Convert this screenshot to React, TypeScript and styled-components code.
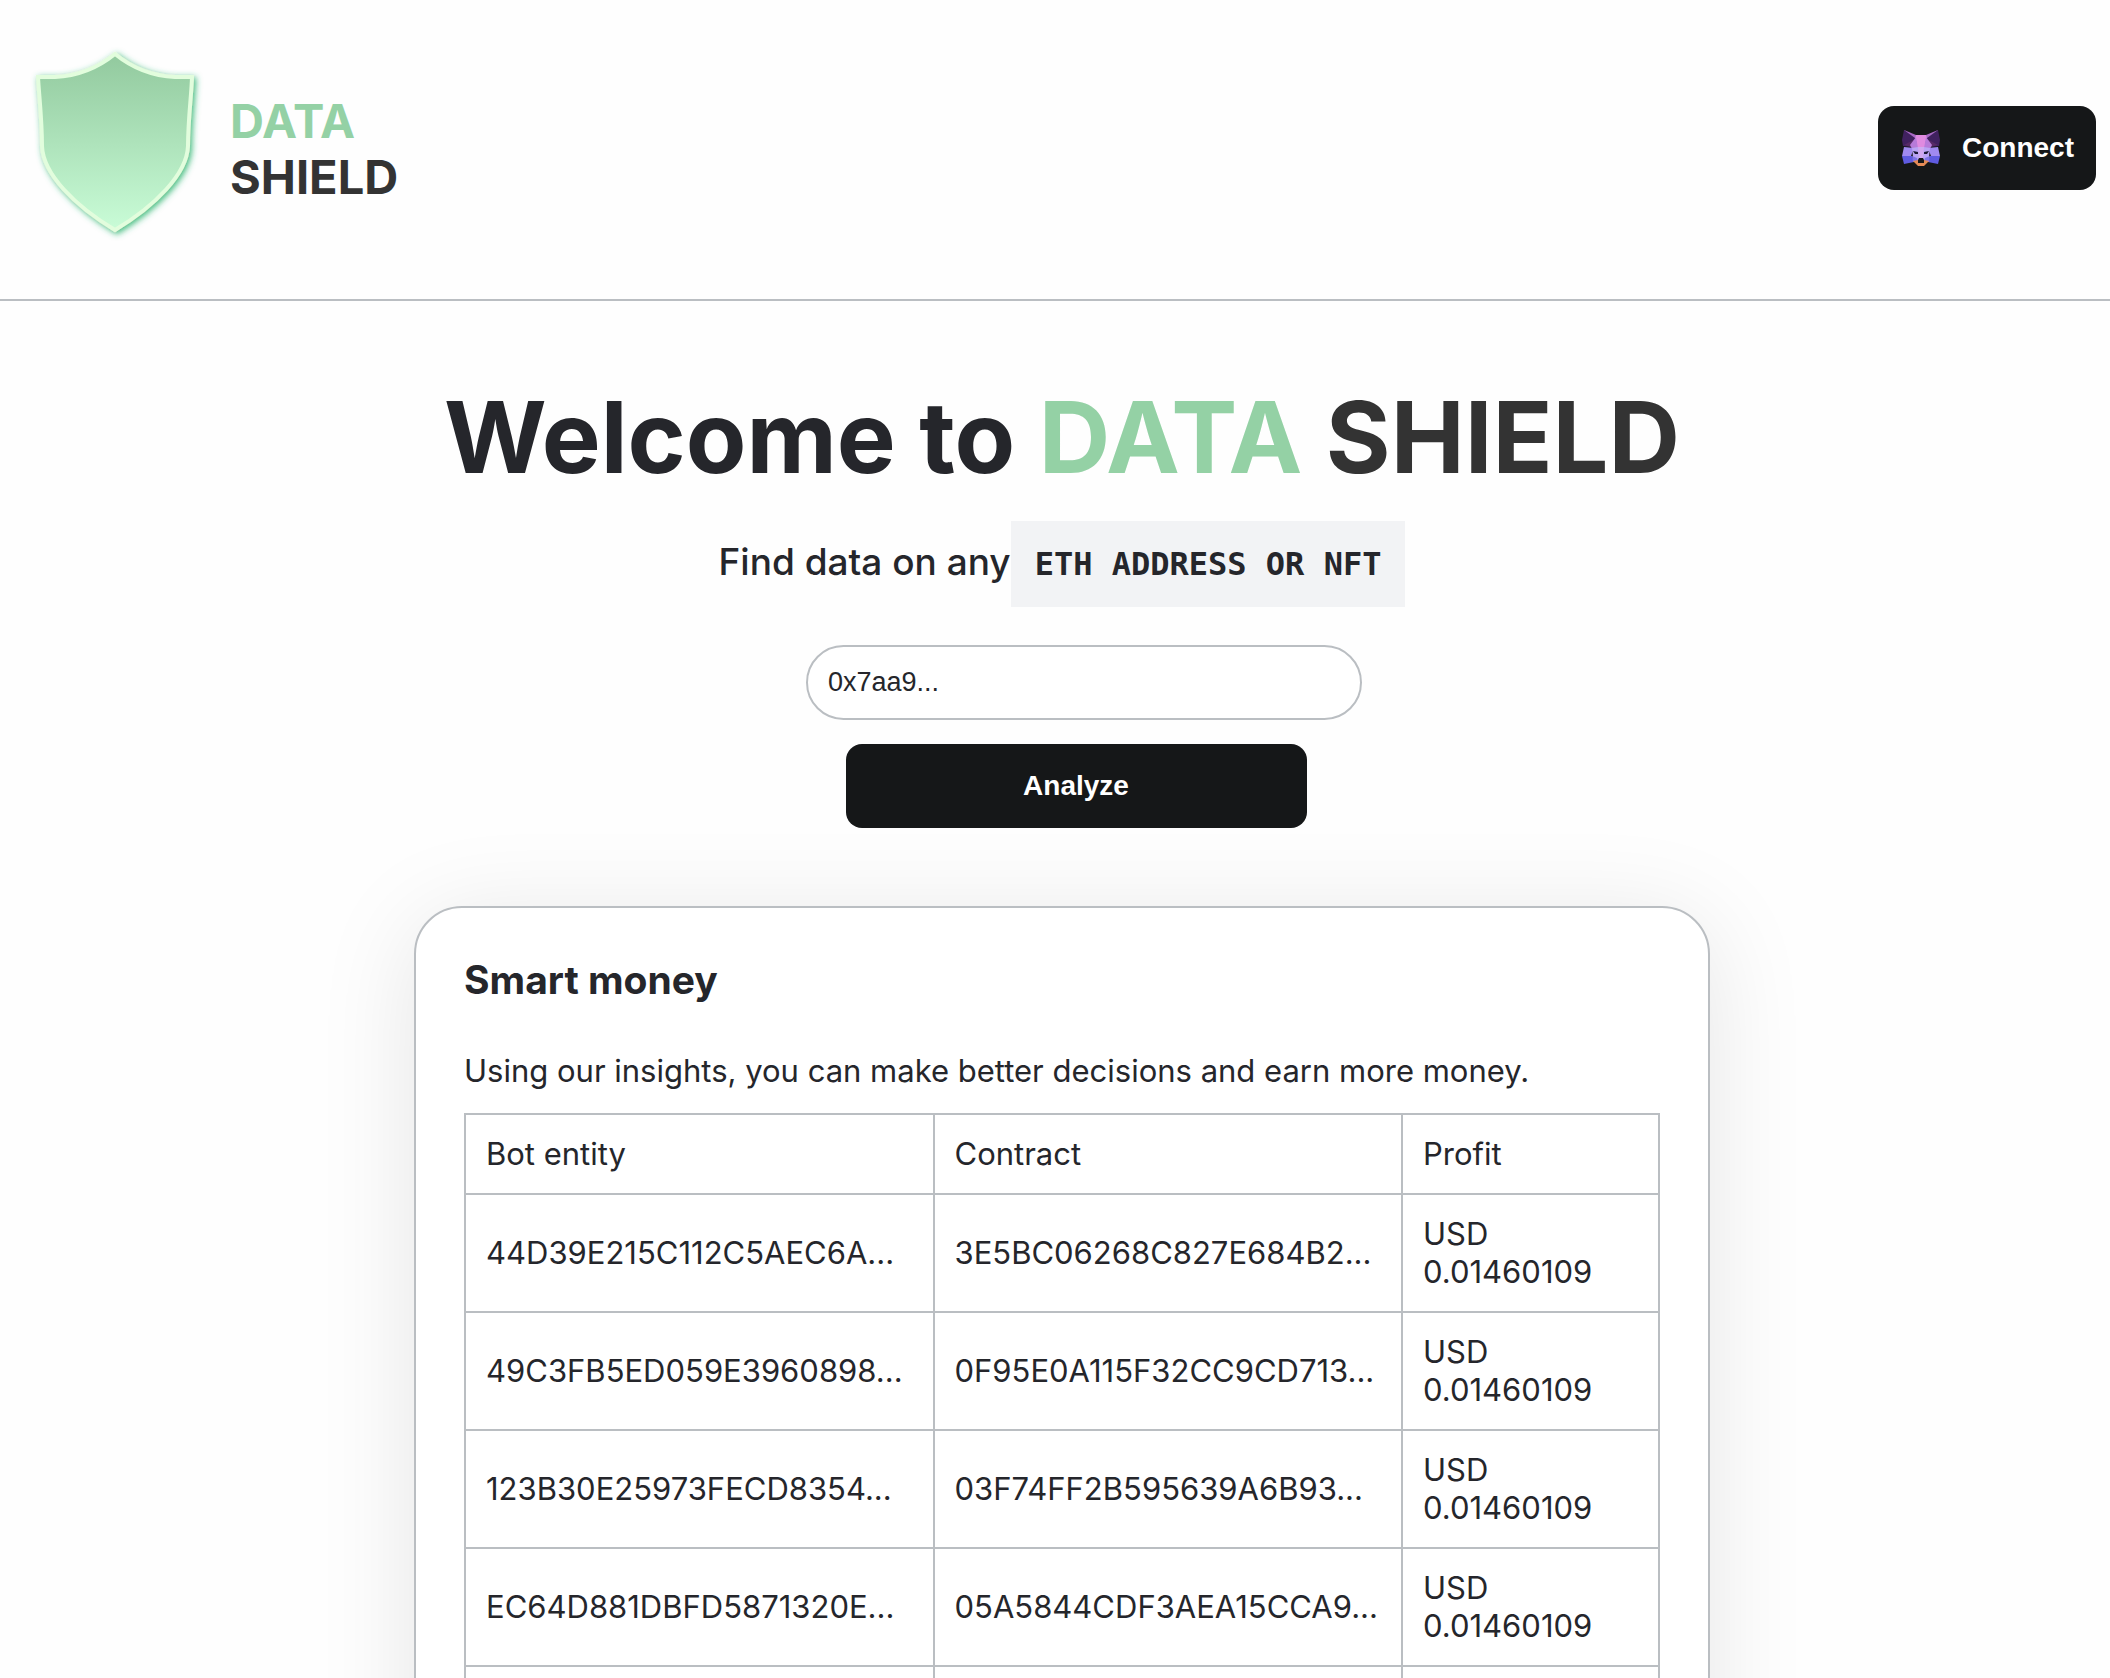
import React, { useState } from "react";
import styled, { createGlobalStyle, css } from "styled-components";

const GlobalStyle = createGlobalStyle`
  *, *::before, *::after { box-sizing: border-box; }
  body {
    margin: 0;
    background: #fefefe;
    color: #25262b;
    font-family: Inter, "Liberation Sans", sans-serif;
    font-size: 31px;
    line-height: 38px;
  }
`;

const Header = styled.header`
  display: flex;
  align-items: center;
  justify-content: space-between;
  padding: 40px 14px 44px 26px;
  border-bottom: 2px solid #babec2;
`;

const Brand = styled.a`
  display: flex;
  align-items: center;
  gap: 23px;
  color: inherit;
  text-decoration: none;
`;

const BrandName = styled.span`
  display: flex;
  flex-direction: column;
  padding-top: 3px;
  font-size: 47px;
  font-weight: 700;
  line-height: 56px;
`;

const Tone = styled.span<{ $accent?: boolean }>`
  color: ${(p) => (p.$accent ? "#94d1a5" : "#333333")};
`;

const Button = styled.button<{ $wide?: boolean }>`
  display: flex;
  align-items: center;
  justify-content: center;
  gap: 20px;
  width: ${(p) => (p.$wide ? "461px" : "auto")};
  height: 84px;
  padding: 0 22px;
  border: 0;
  border-radius: 16px;
  background: #151718;
  color: #ffffff;
  font: 700 28px/32px "Liberation Sans", Arial, sans-serif;
  cursor: pointer;
`;

const Main = styled.main`
  display: flex;
  flex-direction: column;
  align-items: center;
  padding: 68px 0 80px 14px;
`;

const Title = styled.h1`
  margin: 0;
  font-size: 99px;
  font-weight: 700;
  line-height: 136px;
  text-align: center;
`;

const Subtitle = styled.p`
  display: flex;
  align-items: baseline;
  margin: 16px 0 38px;
  font-size: 37px;
  font-weight: 500;
  line-height: 48px;
`;

const Code = styled.code`
  padding: 24px;
  background: #f2f3f5;
  font: 700 32px/38px "DejaVu Sans Mono", monospace;
`;

const Form = styled.form`
  display: flex;
  flex-direction: column;
  align-items: center;
  gap: 24px;
  padding-left: 28px;
`;

const Field = styled.label`
  display: block;
  padding-left: 16px;
`;

const AddressInput = styled.input`
  display: block;
  width: 556px;
  height: 75px;
  padding: 0 20px;
  border: 2px solid #babec2;
  border-radius: 38px;
  background: #ffffff;
  color: #25262b;
  font: 27px/32px "Liberation Sans", Arial, sans-serif;
`;

const Card = styled.section`
  width: 1296px;
  max-width: 100%;
  margin-top: 78px;
  padding: 48px;
  border: 2px solid #babec2;
  border-radius: 48px;
  background: #ffffff;
  box-shadow: 0 14px 100px rgba(0, 0, 0, 0.1);
`;

const CardTitle = styled.h2`
  margin: 0 0 48px;
  font-size: 39px;
  font-weight: 700;
  line-height: 48px;
`;

const Lead = styled.p`
  margin: 0 0 23px;
`;

const Table = styled.table`
  width: 100%;
  table-layout: fixed;
  border-collapse: collapse;
`;

const cell = css`
  padding: 20px;
  border: 2px solid #babec2;
  text-align: left;
  vertical-align: middle;
  font-weight: 400;
`;

const HeadCell = styled.th<{ $narrow?: boolean }>`
  ${cell}
  width: ${(p) => (p.$narrow ? "257px" : "auto")};
`;

const Cell = styled.td`
  ${cell}
  height: 118px;
`;

const rows = [
  ["44D39E215C112C5AEC6A...", "3E5BC06268C827E684B2...", "USD 0.01460109"],
  ["49C3FB5ED059E3960898...", "0F95E0A115F32CC9CD713...", "USD 0.01460109"],
  ["123B30E25973FECD8354...", "03F74FF2B595639A6B93...", "USD 0.01460109"],
  ["EC64D881DBFD5871320E...", "05A5844CDF3AEA15CCA9...", "USD 0.01460109"],
  ["", "", ""],
];

const ShieldLogo = () => (
  <svg width="181" height="215" viewBox="26 40 181 215" aria-hidden="true">
    <defs>
      <linearGradient id="shield" x1="0" y1="0" x2="0" y2="1">
        <stop offset="0" stopColor="#92c99e" />
        <stop offset="1" stopColor="#c9fcd7" />
      </linearGradient>
      <filter id="glow" x="-15%" y="-15%" width="130%" height="130%">
        <feDropShadow dx="2" dy="2" stdDeviation="3" floodColor="#2fb56f" floodOpacity="0.9" />
      </filter>
    </defs>
    <path
      d="M115 54C131 67 152 76 175 77H192C191.500 95 188 120 188 146C187 174 155 206 115 230C75 206 43 174 42 146C42 120 39 95 38 77H55C78 76 99 67 115 54Z"
      fill="url(#shield)"
      stroke="#e2fddd"
      strokeWidth="4"
      filter="url(#glow)"
    />
  </svg>
);

const FoxLogo = () => (
  <svg width="42" height="38" viewBox="0 0 42 38" aria-hidden="true">
    <path d="M15 6H27L30 20H12Z" fill="#e08be0" />
    <path d="M4 1L16 6L14 13H9Z" fill="#a868c4" />
    <path d="M38 1L26 6L28 13H33Z" fill="#a868c4" />
    <path d="M4 1L15 9L17 15L12 18L3 17L2 11Z" fill="#40215f" />
    <path d="M38 1L27 9L25 15L30 18L39 17L40 11Z" fill="#40215f" />
    <path d="M4 16L15 10L12 18Z" fill="#572a66" />
    <path d="M38 16L27 10L30 18Z" fill="#572a66" />
    <path d="M16 8L18 19L12 20L10 16Z" fill="#b77bd9" />
    <path d="M26 8L24 19L30 20L32 16Z" fill="#b77bd9" />
    <path d="M4 18L14 19L11 27H2Z" fill="#a08af0" />
    <path d="M38 18L28 19L31 27H40Z" fill="#a08af0" />
    <path d="M2 27H12L14 33L4 35Z" fill="#5f5be0" />
    <path d="M40 27H30L28 33L38 35Z" fill="#5f5be0" />
    <path d="M12 19L18 18H24L30 19L29 28L25 31H17L13 28Z" fill="#b9a4f4" />
    <path d="M12 27L17 29L18 32L13 33Z" fill="#7f74e6" />
    <path d="M30 27L25 29L24 32L29 33Z" fill="#7f74e6" />
    <path d="M18 18H24L23 29H19Z" fill="#d0a9f0" />
    <path d="M13 22L18 23V25H15Z" fill="#1c1935" />
    <path d="M29 22L24 23V25H27Z" fill="#1c1935" />
    <path d="M13 32L18 31H24L29 32L24 37H18Z" fill="#e38a55" />
    <path d="M19 29H23L24 31V34H18V31Z" fill="#151718" />
  </svg>
);

export default function App() {
  const [address, setAddress] = useState("0x7aa9...");
  return (
    <>
      <GlobalStyle />
      <Header>
        <Brand href="#">
          <ShieldLogo />
          <BrandName>
            <Tone $accent>DATA</Tone>
            <Tone>SHIELD</Tone>
          </BrandName>
        </Brand>
        <Button type="button">
          <FoxLogo />
          Connect
        </Button>
      </Header>
      <Main>
        <Title>
          Welcome to <Tone $accent>DATA</Tone> <Tone>SHIELD</Tone>
        </Title>
        <Subtitle>
          Find data on any<Code>ETH ADDRESS OR NFT</Code>
        </Subtitle>
        <Form onSubmit={(e) => e.preventDefault()}>
          <Field>
            <AddressInput
              aria-label="Address"
              value={address}
              onChange={(e) => setAddress(e.target.value)}
            />
          </Field>
          <Button type="submit" $wide>
            Analyze
          </Button>
        </Form>
        <Card>
          <CardTitle>Smart money</CardTitle>
          <Lead>Using our insights, you can make better decisions and earn more money.</Lead>
          <Table>
            <thead>
              <tr>
                <HeadCell>Bot entity</HeadCell>
                <HeadCell>Contract</HeadCell>
                <HeadCell $narrow>Profit</HeadCell>
              </tr>
            </thead>
            <tbody>
              {rows.map(([bot, contract, profit], i) => (
                <tr key={i}>
                  <Cell>{bot}</Cell>
                  <Cell>{contract}</Cell>
                  <Cell>{profit}</Cell>
                </tr>
              ))}
            </tbody>
          </Table>
        </Card>
      </Main>
    </>
  );
}
